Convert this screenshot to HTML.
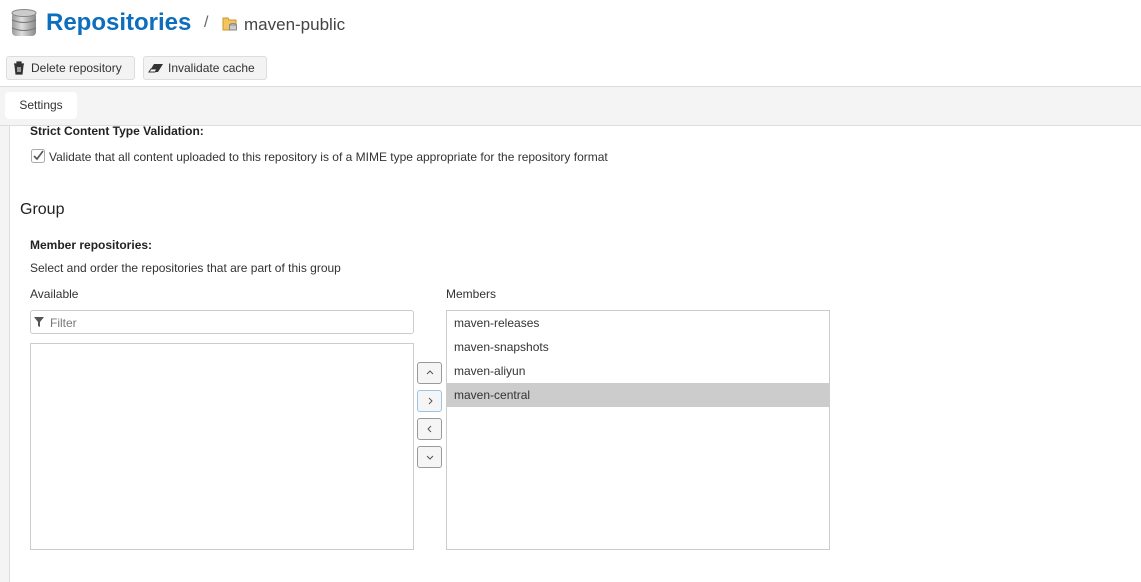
<!DOCTYPE html>
<html><head><style>
*{margin:0;padding:0;box-sizing:border-box}
body{width:1141px;height:582px;overflow:hidden;background:#fff;font-family:"Liberation Sans",sans-serif;color:#333;position:relative}
.a{position:absolute}
.btn{position:absolute;top:56px;height:24px;border:1px solid #ddd;border-radius:3px;background:#f3f3f3;font-size:12px;line-height:22px;padding-left:24px;color:#333}
.sb{position:absolute;left:417px;width:25px;height:22px;border:1px solid #999;border-radius:3px;background:#f5f5f5}
.sb svg{position:absolute;left:8px;top:6px}
.m{position:absolute;left:447px;width:382px;height:24px;font-size:12px;line-height:24px;padding-left:7px;color:#333}
</style></head><body>
<svg class="a" style="left:11px;top:9px" width="26" height="30" viewBox="0 0 26 30">
<defs><linearGradient id="g" x1="0" x2="1"><stop offset="0" stop-color="#999"/><stop offset=".4" stop-color="#ddd"/><stop offset="1" stop-color="#888"/></linearGradient></defs>
<rect x="1" y="3" width="24" height="24" rx="4" fill="url(#g)"/>
<ellipse cx="13" cy="4" rx="12" ry="3.5" fill="#ccc" stroke="#888"/>
<path d="M1 11q12 5 24 0M1 19q12 5 24 0" stroke="#777" fill="none"/>
</svg>
<div class="a" style="left:46px;top:9px;font-size:24px;font-weight:bold;color:#0d6ebd">Repositories</div>
<div class="a" style="left:204px;top:14px;font-size:16px;color:#666">/</div>
<svg class="a" style="left:222px;top:16px" width="16" height="15"><path d="M1 2h5l1 2h7v10H1z" fill="#f3c560" stroke="#c8962a"/><ellipse cx="11" cy="9" rx="3.5" ry="1.5" fill="#ddd" stroke="#888"/><rect x="7.5" y="9" width="7" height="5" fill="#ccc" stroke="#888"/></svg>
<div class="a" style="left:244px;top:15px;font-size:17px;color:#444">maven-public</div>
<div class="btn" style="left:6px;width:129px">Delete repository</div>
<svg class="a" style="left:13px;top:61px" width="12" height="14"><path d="M1 3h10M4 3V1h4v2M2 4h8l-1 9H3z" stroke="#333" fill="#333" stroke-width="1.2"/><path d="M5 6v5M7 6v5" stroke="#fff"/></svg>
<div class="btn" style="left:143px;width:124px">Invalidate cache</div>
<svg class="a" style="left:148px;top:62px" width="16" height="12"><path d="M1 10L6 2h9l-5 8z" fill="#333"/><path d="M1 10l2-3h6l-2 3z" fill="#fff" stroke="#333"/></svg>
<div class="a" style="left:0;top:86px;width:1141px;height:40px;background:#f4f4f4;border-top:1px solid #ddd;border-bottom:1px solid #ddd"></div>
<div class="a" style="left:5px;top:92px;width:72px;height:27px;background:#fff;border-radius:4px;font-size:12px;line-height:27px;text-align:center">Settings</div>
<div class="a" style="left:0;top:126px;width:10px;height:456px;background:#f4f4f4;border-right:1px solid #ddd"></div>
<div class="a" style="left:30px;top:124px;font-size:12px;font-weight:bold;color:#222">Strict Content Type Validation:</div>
<svg class="a" style="left:31px;top:149px" width="14" height="14"><rect x=".5" y=".5" width="13" height="13" rx="2" fill="#fff" stroke="#aaa"/><path d="M3 7l3 3 6-8" stroke="#555" stroke-width="1.6" fill="none"/></svg>
<div class="a" style="left:49px;top:150px;font-size:12px">Validate that all content uploaded to this repository is of a MIME type appropriate for the repository format</div>
<div class="a" style="left:20px;top:201px;font-size:16px;color:#222">Group</div>
<div class="a" style="left:30px;top:238px;font-size:12px;font-weight:bold;color:#222">Member repositories:</div>
<div class="a" style="left:30px;top:261px;font-size:12px">Select and order the repositories that are part of this group</div>
<div class="a" style="left:30px;top:287px;font-size:12px">Available</div>
<div class="a" style="left:446px;top:287px;font-size:12px">Members</div>
<div class="a" style="left:30px;top:310px;width:384px;height:24px;border:1px solid #ccc;border-radius:3px"></div>
<svg class="a" style="left:34px;top:317px" width="10" height="10"><path d="M0 0h10L6 5v5L4 9V5z" fill="#555"/></svg>
<div class="a" style="left:50px;top:316px;font-size:12px;color:#777">Filter</div>
<div class="a" style="left:30px;top:343px;width:384px;height:207px;border:1px solid #ccc"></div>
<div class="a" style="left:446px;top:310px;width:384px;height:240px;border:1px solid #ccc"></div>
<div class="m" style="top:311px">maven-releases</div>
<div class="m" style="top:335px">maven-snapshots</div>
<div class="m" style="top:359px">maven-aliyun</div>
<div class="m" style="top:383px;background:#ccc">maven-central</div>
<div class="sb" style="top:362px"><svg width="8" height="8"><path d="M1 5l3-3 3 3" stroke="#555" fill="none"/></svg></div>
<div class="sb" style="top:390px;border-color:#9bc3e6"><svg width="8" height="8"><path d="M3 1l3 3-3 3" stroke="#555" fill="none"/></svg></div>
<div class="sb" style="top:418px"><svg width="8" height="8"><path d="M5 1L2 4l3 3" stroke="#555" fill="none"/></svg></div>
<div class="sb" style="top:446px"><svg width="8" height="8"><path d="M1 3l3 3 3-3" stroke="#555" fill="none"/></svg></div>
</body></html>
